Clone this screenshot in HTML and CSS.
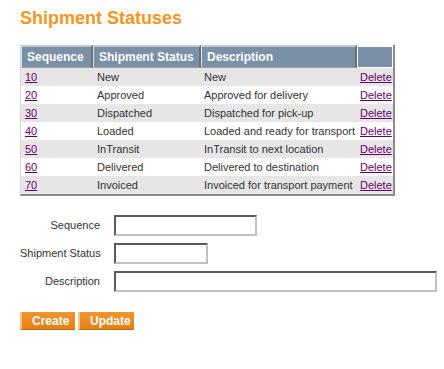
FILE: index.html
```html
<!DOCTYPE html>
<html>
<head>
<meta charset="utf-8">
<link rel="stylesheet" href="styles.css">
</head>
<body>
<h1 class="title">Shipment Statuses</h1>
<table class="grid">
  <thead>
    <tr>
      <th class="c-seq">Sequence</th>
      <th class="c-status">Shipment Status</th>
      <th class="c-desc">Description</th>
      <th class="c-act"></th>
    </tr>
  </thead>
  <tbody>
    <tr class="odd"><td><a href="#">10</a></td><td>New</td><td>New</td><td><a href="#">Delete</a></td></tr>
    <tr><td><a href="#">20</a></td><td>Approved</td><td>Approved for delivery</td><td><a href="#">Delete</a></td></tr>
    <tr class="odd"><td><a href="#">30</a></td><td>Dispatched</td><td>Dispatched for pick-up</td><td><a href="#">Delete</a></td></tr>
    <tr><td><a href="#">40</a></td><td>Loaded</td><td>Loaded and ready for transport</td><td><a href="#">Delete</a></td></tr>
    <tr class="odd"><td><a href="#">50</a></td><td>InTransit</td><td>InTransit to next location</td><td><a href="#">Delete</a></td></tr>
    <tr><td><a href="#">60</a></td><td>Delivered</td><td>Delivered to destination</td><td><a href="#">Delete</a></td></tr>
    <tr class="odd"><td><a href="#">70</a></td><td>Invoiced</td><td>Invoiced for transport payment</td><td><a href="#">Delete</a></td></tr>
  </tbody>
</table>
<form class="form">
  <div class="row"><label>Sequence</label><input class="in-seq" type="text"></div>
  <div class="row"><label>Shipment Status</label><input class="in-status" type="text"></div>
  <div class="row"><label>Description</label><input class="in-desc" type="text"></div>
  <div class="buttons">
    <button type="button" class="btn">Create</button>
    <button type="button" class="btn">Update</button>
  </div>
</form>
</body>
</html>
```
FILE: styles.css
```css
body {
  margin: 0;
  padding: 8px 0 0 20px;
  font-family: "Liberation Sans", Arial, sans-serif;
  font-size: 11px;
  color: #333;
  background: #fff;
}
.title {
  margin: 0;
  font-size: 18px;
  font-weight: bold;
  color: #f7941d;
  line-height: 21px;
}
.grid {
  margin-top: 16px;
  table-layout: fixed;
  border-collapse: separate;
  border-spacing: 0;
  border-left: 1px solid #d4d4d4;
  border-right: 2px solid #8a8a8a;
  border-bottom: 2px solid #8a8a8a;
}
.grid th {
  box-sizing: border-box;
  background: #7990a7;
  color: #fff;
  font-size: 12px;
  font-weight: bold;
  text-align: left;
  height: 23px;
  padding: 0 2px 0 5px;
  border-top: 2px solid #c8c8c8;
  border-left: 1px solid #e0e0e0;
  border-right: 2px solid #6e6e6e;
  border-bottom: 1px solid #a0a0a0;
  white-space: nowrap;
}
.grid th.c-act {
  border: 1px solid #fff;
  border-top: 2px solid #fff;
}
.c-seq { width: 72px; }
.c-status { width: 108px; }
.c-desc { width: 156px; }
.c-act { width: 36px; }
.grid td {
  height: 18px;
  padding: 0 1px 0 4px;
  white-space: nowrap;
}
.grid td:nth-child(3) { padding-left: 3px; }
.grid td:last-child { padding: 0 0 0 3px; }
.grid tr.odd td { background: #e6e6e6; }
.grid a { color: #660066; }
.form {
  margin-top: 15px;
}
.row {
  display: flex;
  align-items: center;
  height: 28px;
}
.row label {
  width: 80px;
  text-align: right;
  padding-right: 14px;
  white-space: nowrap;
}
.row input {
  height: 21px;
  box-sizing: border-box;
  border: 2px solid;
  border-top-color: #5a5a5a;
  border-left-color: #5a5a5a;
  border-right-color: #c0c0c0;
  border-bottom-color: #c0c0c0;
  padding: 0 2px;
  margin: 0;
  background: #fff;
}
.in-seq { width: 143px; }
.in-status { width: 94px; }
.in-desc { width: 323px; }
.buttons {
  display: flex;
  gap: 3px;
  margin-top: 17px;
}
.btn {
  height: 18px;
  padding: 0 8px 0 10px;
  border: 0;
  border-left: 2px solid #f8c48a;
  border-bottom: 1px solid #c46a10;
  background: linear-gradient(#f0962e, #e37f15);
  color: #fff;
  font-family: "Liberation Sans", Arial, sans-serif;
  font-weight: bold;
  font-size: 12px;
  line-height: 16px;
}
.btn:first-child { width: 55px; }
.btn:last-child { width: 56px; }
```
